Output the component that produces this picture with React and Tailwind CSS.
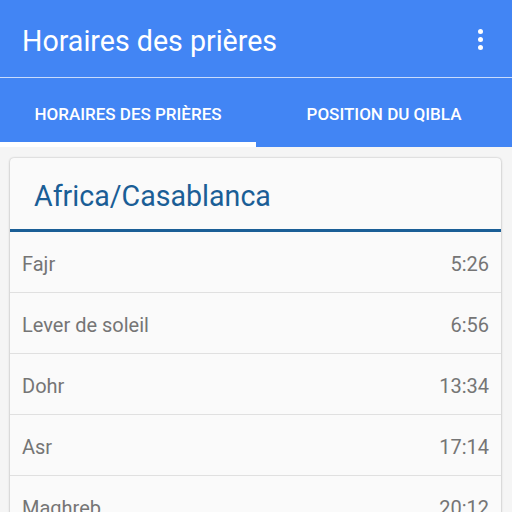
import React from 'react';

const TIMES = [
  { name: 'Fajr', time: '5:26' },
  { name: 'Lever de soleil', time: '6:56' },
  { name: 'Dohr', time: '13:34' },
  { name: 'Asr', time: '17:14' },
  { name: 'Maghreb', time: '20:12' },
  { name: 'Icha', time: '21:37' },
];

export default function App() {
  return (
    <div className="w-[512px] h-[512px] overflow-hidden bg-[#f5f5f5]" style={{ fontFamily: 'Roboto, "Noto Sans", sans-serif' }}>
      {/* Toolbar */}
      <div className="bg-[#4285f4]">
        <div className="h-[77px] flex items-center justify-between pl-[22px] pr-[29px]">
          <h1 className="text-[28.6px] leading-none text-white pt-[6px]">Horaires des prières</h1>
          <div className="flex flex-col items-center gap-[3px] pt-[1px]">
            <span className="w-[5px] h-[5px] rounded-full bg-white" />
            <span className="w-[5px] h-[5px] rounded-full bg-white" />
            <span className="w-[5px] h-[5px] rounded-full bg-white" />
          </div>
        </div>
        <div className="h-px bg-[#c9dcfc]" />
        {/* Tabs */}
        <div className="flex h-[69px]">
          <div className="flex-1 flex flex-col">
            <div className="flex-1 flex items-center justify-center pt-[9px]">
              <span className="text-[17px] font-medium text-white">HORAIRES DES PRIÈRES</span>
            </div>
            <div className="h-[5px] bg-white" />
          </div>
          <div className="flex-1 flex items-center justify-center pt-[4px]">
            <span className="text-[17px] font-medium text-white">POSITION DU QIBLA</span>
          </div>
        </div>
      </div>

      {/* Card */}
      <div className="ml-[10px] mr-[11px] mt-[11px] bg-[#fafafa] rounded-[4px] shadow-[0_0_2px_rgba(0,0,0,0.25),0_1px_3px_rgba(0,0,0,0.12)]">
        <div className="h-[71px] flex items-center pl-[24px]">
          <h2 className="text-[28.6px] leading-none text-[#1a5e96] pt-[5px]">Africa/Casablanca</h2>
        </div>
        <div className="h-[3px] bg-[#1a5e96]" />
        {TIMES.map((t, i) => (
          <div
            key={t.name}
            className={`h-[61px] flex items-center justify-between px-[12px] pt-[3px] text-[20px] text-[#757575] ${i < TIMES.length - 1 ? 'border-b border-[#e0e0e0]' : ''}`}
          >
            <span>{t.name}</span>
            <span>{t.time}</span>
          </div>
        ))}
      </div>
    </div>
  );
}
